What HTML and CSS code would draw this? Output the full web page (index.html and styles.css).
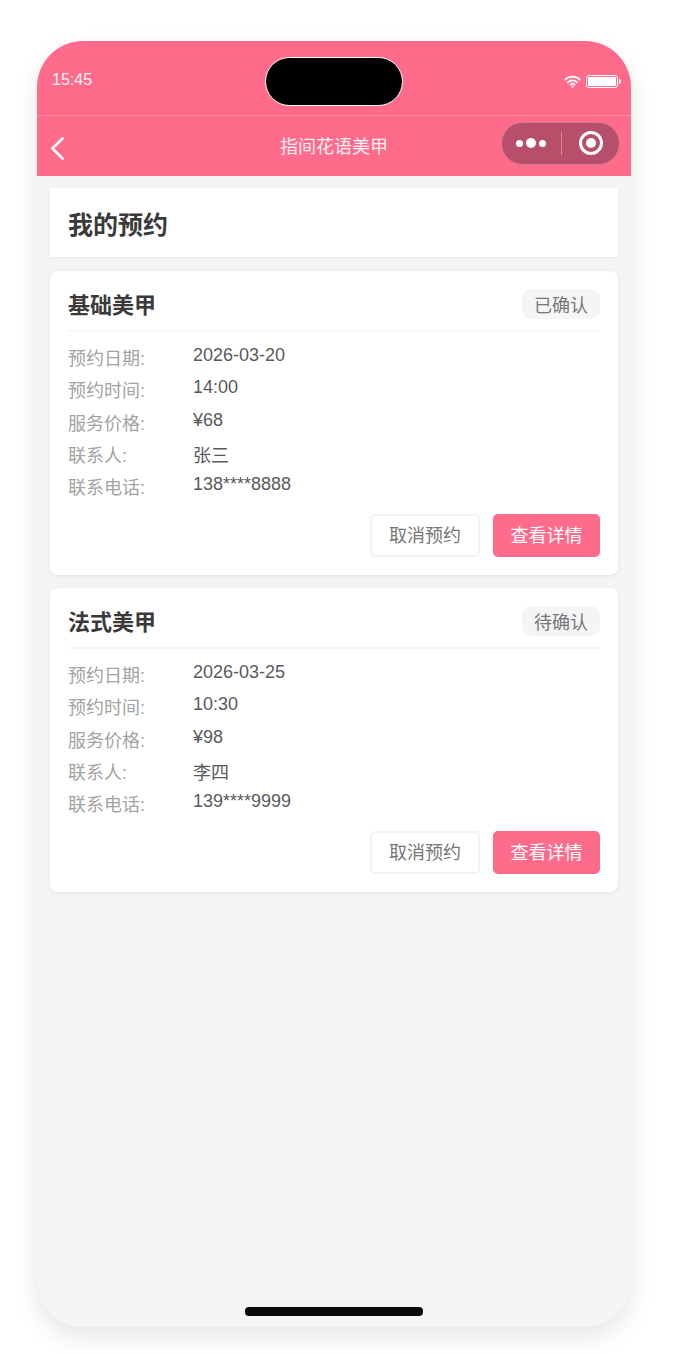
FILE: index.html
```html
<!DOCTYPE html>
<html lang="zh-CN">
<head>
<meta charset="UTF-8" />
<title>我的预约</title>
<link rel="stylesheet" href="styles.css">
</head>
<body>
<div class="phone">
    <div class="island"></div>
    <div class="status-bar">
        <span class="time">15:45</span>
        <div class="status-icons">
            <svg class="wifi" width="17" height="13" viewBox="0 0 17 13" fill="none" stroke="#fff" stroke-width="1.7" stroke-linecap="round">
                <path d="M1.2 4.6a10.4 10.4 0 0 1 14.6 0" />
                <path d="M3.9 7.3a6.5 6.5 0 0 1 9.2 0" />
                <path d="M6.4 9.7a3 3 0 0 1 4.2 0" />
                <circle cx="8.5" cy="11.7" r="0.7" fill="#fff" stroke-width="1" />
            </svg>
            <div class="battery"><div class="battery-fill"></div></div>
            <div class="battery-tip"></div>
        </div>
    </div>
    <div class="nav-bar">
        <svg class="back" width="14" height="23" viewBox="0 0 14 23" fill="none" stroke="#fff" stroke-width="2.6" stroke-linecap="round" stroke-linejoin="round">
            <path d="M12.5 1.5 2.5 11.5l10 10" />
        </svg>
        <div class="nav-title">指间花语美甲</div>
        <div class="capsule">
            <div class="dots"><i></i><i class="big"></i><i></i></div>
            <div class="capsule-line"></div>
            <div class="target"></div>
        </div>
    </div>

    <div class="content">
        <div class="page-title">我的预约</div>

        <div class="card">
            <div class="card-head">
                <span class="service">基础美甲</span>
                <span class="tag">已确认</span>
            </div>
            <div class="rows">
                <div class="row"><span class="label">预约日期:</span><span class="value">2026-03-20</span></div>
                <div class="row"><span class="label">预约时间:</span><span class="value">14:00</span></div>
                <div class="row"><span class="label">服务价格:</span><span class="value">¥68</span></div>
                <div class="row"><span class="label">联系人:</span><span class="value name">张三</span></div>
                <div class="row"><span class="label">联系电话:</span><span class="value">138****8888</span></div>
            </div>
            <div class="actions">
                <div class="btn btn-cancel">取消预约</div>
                <div class="btn btn-view">查看详情</div>
            </div>
        </div>

        <div class="card">
            <div class="card-head">
                <span class="service">法式美甲</span>
                <span class="tag">待确认</span>
            </div>
            <div class="rows">
                <div class="row"><span class="label">预约日期:</span><span class="value">2026-03-25</span></div>
                <div class="row"><span class="label">预约时间:</span><span class="value">10:30</span></div>
                <div class="row"><span class="label">服务价格:</span><span class="value">¥98</span></div>
                <div class="row"><span class="label">联系人:</span><span class="value name">李四</span></div>
                <div class="row"><span class="label">联系电话:</span><span class="value">139****9999</span></div>
            </div>
            <div class="actions">
                <div class="btn btn-cancel">取消预约</div>
                <div class="btn btn-view">查看详情</div>
            </div>
        </div>
    </div>
    <div class="home-bar"></div>
</div>
</body>
</html>
```

FILE: styles.css
```css
body {
    margin: 0;
    background: #fff;
    font-family: "Liberation Sans", "Noto Sans CJK SC", sans-serif;
    padding: 41px 43px 27px 37px;
}
.phone {
    position: relative;
    height: 1286px;
    border-radius: 46px;
    background: #f5f5f5;
    overflow: hidden;
    box-shadow: 0 10px 24px rgba(0, 0, 0, 0.1);
    display: flex;
    flex-direction: column;
}
.island {
    position: absolute;
    top: 16px;
    left: 228px;
    width: 138px;
    height: 49px;
    box-sizing: border-box;
    background: #000;
    border: 1px solid #fff;
    border-radius: 25px;
}
.status-bar {
    height: 75px;
    box-sizing: border-box;
    background: #ff6b8b;
    border-bottom: 1px solid #ff8aa3;
    padding: 0 10px 0 15px;
    display: flex;
    align-items: center;
    justify-content: space-between;
    color: #fff;
}
.time {
    font-size: 16px;
    margin-top: 3px;
    opacity: 0.92;
}
.status-icons {
    display: flex;
    align-items: center;
    margin-top: 6px;
}
.wifi {
    margin-right: 5px;
}
.battery {
    width: 32px;
    height: 13px;
    box-sizing: border-box;
    border: 1px solid #fff;
    border-radius: 3px;
    padding: 1px;
}
.battery-fill {
    height: 100%;
    background: #fff;
    border-radius: 1px;
}
.battery-tip {
    width: 2px;
    height: 5px;
    margin-left: 1px;
    background: #fff;
    border-radius: 0 2px 2px 0;
}
.nav-bar {
    height: 60px;
    background: #ff6b8b;
    position: relative;
    display: flex;
    align-items: center;
    justify-content: space-between;
    padding: 0 11px 0 13px;
}
.back {
    margin-top: 4px;
}
.nav-title {
    position: absolute;
    left: 0;
    right: 0;
    top: 16px;
    text-align: center;
    font-size: 18px;
    color: #fff0f3;
}
.capsule {
    width: 119px;
    height: 43px;
    box-sizing: border-box;
    margin-top: -6px;
    background: #b84f6a;
    border: 1px solid #cf7f92;
    border-radius: 22px;
    display: flex;
    align-items: center;
    padding-left: 14px;
}
.dots {
    display: flex;
    align-items: center;
    gap: 3px;
}
.dots i {
    width: 7px;
    height: 7px;
    border-radius: 50%;
    background: #fff;
}
.dots .big {
    width: 10px;
    height: 10px;
}
.capsule-line {
    width: 1px;
    height: 23px;
    background: #d58a9c;
    margin-left: 15px;
}
.target {
    width: 24px;
    height: 24px;
    box-sizing: border-box;
    border: 3px solid #fff;
    border-radius: 50%;
    margin-left: 17px;
    display: flex;
    align-items: center;
    justify-content: center;
}
.target::after {
    content: "";
    width: 10px;
    height: 10px;
    border-radius: 50%;
    background: #fff;
}
.content {
    flex: 1;
    padding: 12px 13px 0;
    display: flex;
    flex-direction: column;
    gap: 13px;
}
.page-title {
    height: 69px;
    box-sizing: border-box;
    padding-left: 18px;
    background: #fff;
    box-shadow: 0 1px 4px rgba(0, 0, 0, 0.06);
    display: flex;
    align-items: center;
    font-size: 25px;
    font-weight: bold;
    color: #3a3a3a;
    margin-bottom: 1px;
}
.card {
    height: 304px;
    box-sizing: border-box;
    background: #fff;
    border-radius: 8px;
    box-shadow: 0 1px 5px rgba(0, 0, 0, 0.08);
    padding: 17px 18px 0;
}
.card-head {
    display: flex;
    align-items: center;
    justify-content: space-between;
    padding-bottom: 11px;
    border-bottom: 2px solid #f7f7f7;
}
.service {
    font-size: 22px;
    font-weight: bold;
    color: #3a3a3a;
    margin-top: -1px;
}
.tag {
    width: 78px;
    height: 30px;
    background: #f5f5f5;
    border-radius: 9px;
    color: #777;
    font-size: 18px;
    display: flex;
    align-items: center;
    justify-content: center;
}
.rows {
    margin-top: 12px;
    display: flex;
    flex-direction: column;
    gap: 6px;
}
.row {
    display: flex;
    height: 26.3px;
    font-size: 18px;
}
.label {
    width: 125px;
    color: #a3a3a3;
}
.value {
    padding-top: 1px;
    color: #5a5a5a;
}
.value.name {
    padding-top: 0;
}
.actions {
    margin-top: 15px;
    display: flex;
    justify-content: flex-end;
    gap: 13px;
}
.btn {
    height: 43px;
    box-sizing: border-box;
    padding-bottom: 3px;
    border-radius: 5px;
    font-size: 18px;
    display: flex;
    align-items: center;
    justify-content: center;
}
.btn-cancel {
    width: 110px;
    background: #fff;
    border: 2px solid #f3f3f3;
    color: #777;
}
.btn-view {
    width: 107px;
    background: #ff6b8b;
    color: #fff;
}
.home-bar {
    position: absolute;
    left: 208px;
    bottom: 11px;
    width: 178px;
    height: 9px;
    background: #0a0a0a;
    border-radius: 4px;
}
```
